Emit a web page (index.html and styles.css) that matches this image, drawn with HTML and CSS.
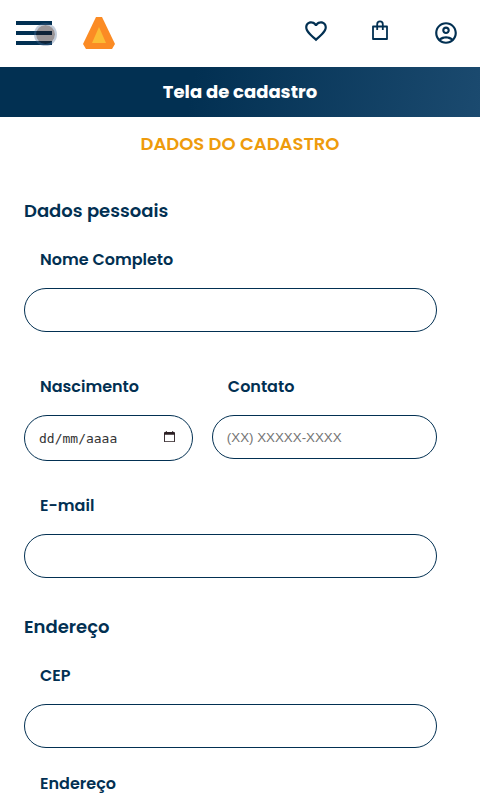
FILE: index.html
```html
<!DOCTYPE html>
<html lang="pt-BR">
<head>
<meta charset="utf-8">
<meta name="viewport" content="width=device-width, initial-scale=1">
<title>Tela de cadastro</title>
<link rel="stylesheet" href="styles.css">
</head>
<body>
<header class="topbar">
  <button class="menu" type="button" aria-label="Menu">
    <span class="menu-bar"></span>
    <span class="menu-bar"></span>
    <span class="menu-bar"></span>
    <span class="touch"></span>
  </button>
  <a class="logo" href="#" aria-label="Início">
    <svg width="32" height="32" viewBox="0 0 32 32"><path fill="#fb8b24" d="M13 0h6l13 27-3 5H3l-3-5z"/><path fill="#fbbc34" d="M16 10l7 16H9z"/></svg>
  </a>
  <nav class="actions">
    <a href="#" aria-label="Favoritos"><svg width="26" height="26" viewBox="0 0 24 24"><path d="M16.5 3c-1.74 0-3.41.81-4.5 2.09C10.91 3.81 9.24 3 7.5 3 4.42 3 2 5.42 2 8.5c0 3.78 3.4 6.86 8.55 11.54L12 21.35l1.45-1.32C18.6 15.36 22 12.28 22 8.5 22 5.42 19.58 3 16.5 3zm-4.4 15.55l-.1.1-.1-.1C7.14 14.24 4 11.39 4 8.5 4 6.5 5.5 5 7.5 5c1.54 0 3.04.99 3.57 2.36h1.87C13.46 5.99 14.96 5 16.5 5c2 0 3.5 1.5 3.5 3.5 0 2.89-3.14 5.74-7.9 10.05z"/></svg></a>
    <a href="#" aria-label="Sacola"><svg width="26" height="26" viewBox="0 0 26 26"><path fill="none" stroke="#023052" stroke-width="1.8" stroke-linejoin="round" d="M5 8.500h14v12.500H5zM9.200 12V6.200a2.800 2.800 0 0 1 5.600 0V12"/></svg></a>
    <a class="account" href="#" aria-label="Minha conta"><svg width="26" height="26" viewBox="0 0 24 24"><path d="M12 2C6.48 2 2 6.480 2 12s4.480 10 10 10 10-4.480 10-10S17.520 2 12 2zM7.350 18.500C8.660 17.560 10.260 17 12 17s3.340.560 4.650 1.500C15.340 19.440 13.740 20 12 20s-3.340-.560-4.650-1.500zm10.790-1.380C16.450 15.800 14.320 15 12 15s-4.450.800-6.140 2.120C4.700 15.730 4 13.950 4 12c0-4.420 3.580-8 8-8s8 3.580 8 8c0 1.950-.700 3.730-1.860 5.120zM12 6c-1.930 0-3.500 1.570-3.500 3.500S10.070 13 12 13s3.500-1.570 3.500-3.500S13.930 6 12 6zm0 5c-.830 0-1.500-.670-1.500-1.500S11.170 8 12 8s1.500.670 1.500 1.500S12.830 11 12 11z"/></svg></a>
  </nav>
</header>
<main>
  <h1 class="banner">Tela de cadastro</h1>
  <h2 class="title">DADOS DO CADASTRO</h2>
  <form class="form">
    <section class="group">
      <h3 class="heading">Dados pessoais</h3>
      <div class="field">
        <label for="nome">Nome Completo</label>
        <input id="nome" type="text">
      </div>
      <div class="row">
        <div class="field">
          <label for="nascimento">Nascimento</label>
          <div class="date">
            <input id="nascimento" type="text" inputmode="numeric" placeholder="dd/mm/aaaa">
            <button class="calendar" type="button" aria-label="Abrir calendário"><svg width="11" height="12" viewBox="0 0 12 13"><path fill="#2c2024" fill-rule="evenodd" d="M2 0h1v1h6V0h1v1h1q1 0 1 1v9q0 1-1 1H1q-1 0-1-1V2q0-1 1-1h1zM1 4v7h10V4z"/></svg></button>
          </div>
        </div>
        <div class="field">
          <label for="contato">Contato</label>
          <input id="contato" type="tel" placeholder="(XX) XXXXX-XXXX">
        </div>
      </div>
      <div class="field">
        <label for="email">E-mail</label>
        <input id="email" type="email">
      </div>
    </section>
    <section class="group">
      <h3 class="heading">Endereço</h3>
      <div class="field">
        <label for="cep">CEP</label>
        <input id="cep" type="text">
      </div>
      <div class="caption">Endereço</div>
    </section>
  </form>
</main>
</body>
</html>
```
FILE: styles.css
```css
* { box-sizing: border-box; }

body {
  margin: 0;
  background: #fff;
  color: #023052;
  font-family: Poppins, Inter, "Open Sans", sans-serif;
}

h1, h2, h3 { margin: 0; }

.topbar {
  display: flex;
  align-items: center;
  height: 67px;
  padding: 0 21px 1px 16px;
}

.menu {
  position: relative;
  display: flex;
  flex-direction: column;
  gap: 6px;
  width: 36px;
  padding: 0;
  border: 0;
  background: none;
}

.menu-bar {
  height: 4px;
  background: #023052;
}

.touch {
  position: absolute;
  top: 2px;
  left: 18px;
  width: 23px;
  height: 23px;
  border: 2px solid rgba(80, 110, 150, 0.35);
  border-radius: 50%;
  background: rgba(30, 20, 25, 0.45);
  background-clip: padding-box;
}

.logo {
  display: block;
  height: 32px;
  margin-left: 31px;
}

.actions {
  display: flex;
  gap: 39px;
  margin-left: auto;
  padding-bottom: 4px;
}

.actions a { height: 26px; }
.actions svg { display: block; fill: #023052; }
.actions .account { padding-top: 2px; }

.banner {
  padding: 11px 16px;
  background: linear-gradient(100deg, #023052 40%, #1b4a6f);
  color: #fff;
  font-size: 18px;
  font-weight: 700;
  line-height: 28px;
  text-align: center;
}

.title {
  padding-top: 13px;
  color: #ee9b0c;
  font-size: 18px;
  font-weight: 600;
  line-height: 28px;
  text-align: center;
}

.form {
  display: flex;
  flex-direction: column;
  gap: 35px;
  padding: 39px 43px 0 24px;
}

.heading {
  margin-bottom: 23px;
  font-size: 18px;
  font-weight: 600;
  line-height: 28px;
}

.field label,
.caption {
  display: block;
  padding-left: 16px;
  font-size: 16px;
  font-weight: 600;
  line-height: 24px;
}

.field label { margin-bottom: 16px; }

.field input {
  display: block;
  width: 100%;
  height: 44px;
  padding: 0 14px;
  border: 1px solid #023052;
  border-radius: 23px;
  background: #fff;
  color: #023052;
  font-family: "Liberation Sans", sans-serif;
}

.field input::placeholder { color: #757575; }

.row {
  display: grid;
  grid-template-columns: 3fr 4fr;
  gap: 19px;
  margin: 43px 0 33px;
}

.date { position: relative; }

.field .date input {
  height: 46px;
  font-family: "DejaVu Sans Mono", monospace;
  font-size: 13px;
}

.field .date input::placeholder { color: #333; }

.calendar {
  position: absolute;
  top: 16px;
  right: 18px;
  padding: 0;
  border: 0;
  background: none;
  line-height: 0;
}

.caption { margin-top: 24px; }
```
